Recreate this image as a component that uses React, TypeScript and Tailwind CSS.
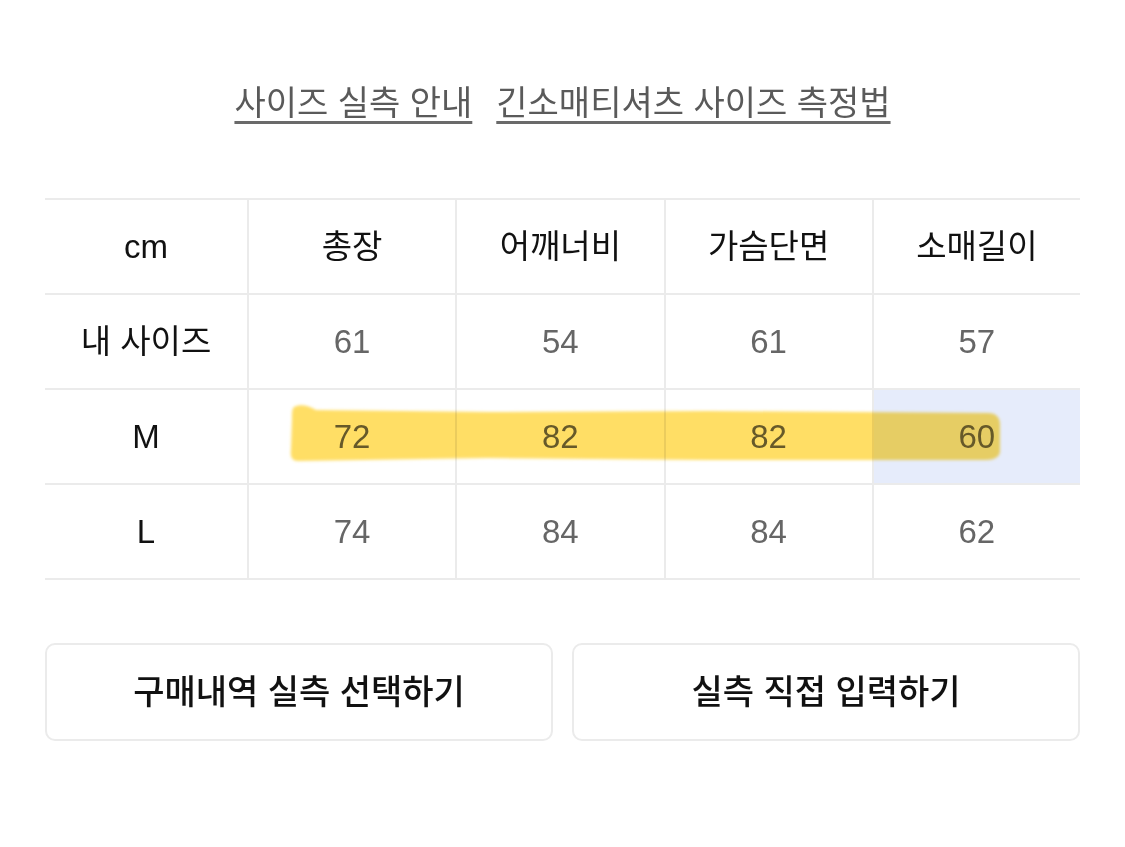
import React from "react";

const font = { fontFamily: '"Liberation Sans", "Noto Sans CJK KR", sans-serif' };

const headers = ["cm", "총장", "어깨너비", "가슴단면", "소매길이"];
const rows: { label: string; values: string[] }[] = [
  { label: "내 사이즈", values: ["61", "54", "61", "57"] },
  { label: "M", values: ["72", "82", "82", "60"] },
  { label: "L", values: ["74", "84", "84", "62"] },
];

export default function App() {
  return (
    <div className="w-[1125px] h-[847px] bg-white relative overflow-hidden" style={font}>
      <div className="flex justify-center gap-[24px] pt-[83px] h-[198px]">
        <span className="text-[34px] leading-[40px] text-[#5a5a5a] underline decoration-[3px] underline-offset-[6px] decoration-[#6a6a6a]">
          사이즈 실측 안내
        </span>
        <span className="text-[34px] leading-[40px] text-[#5a5a5a] underline decoration-[3px] underline-offset-[6px] decoration-[#6a6a6a]">
          긴소매티셔츠 사이즈 측정법
        </span>
      </div>

      <div className="relative mx-[45px]">
        <div className="grid grid-cols-[202px_repeat(4,1fr)] border-t-2 border-[#ebebeb]">
          {headers.map((h, i) => (
            <div
              key={h}
              className={`h-[95px] flex items-center justify-center border-b-2 border-[#ebebeb] text-[33px] text-[#111] ${
                i > 0 ? "border-l-2" : ""
              }`}
            >
              {h}
            </div>
          ))}
          {rows.map((r) => (
            <React.Fragment key={r.label}>
              <div className="h-[95px] flex items-center justify-center border-b-2 border-[#ebebeb] text-[33px] text-[#111]">
                {r.label}
              </div>
              {r.values.map((v, j) => (
                <div
                  key={j}
                  className={`h-[95px] flex items-center justify-center border-b-2 border-l-2 border-[#ebebeb] text-[33px] text-[#666] ${
                    r.label === "M" && j === 3 ? "bg-[#e6ecfb]" : ""
                  }`}
                >
                  {v}
                </div>
              ))}
            </React.Fragment>
          ))}
        </div>
        <svg
          className="absolute left-[243px] top-[203px] pointer-events-none mix-blend-multiply"
          width="720"
          height="68"
          viewBox="0 0 720 68"
        >
          <defs>
            <filter id="soft" x="-5%" y="-20%" width="110%" height="140%">
              <feGaussianBlur stdDeviation="1.6" />
            </filter>
          </defs>
          <path
            d="M6 6 C12 3 20 4 28 9 L200 11 L420 10 L700 12 C708 12 712 16 712 24 L712 50 C712 56 706 59 698 59 L420 59 L200 57 L10 60 C4 60 2 56 3 48 L4 18 C4 12 4 8 6 6 Z"
            fill="#ffd84a"
            fillOpacity="0.85"
            filter="url(#soft)"
          />
        </svg>
      </div>

      <div className="flex gap-[19px] mx-[45px] mt-[63px]">
        <button className="flex-1 h-[98px] rounded-[10px] border-2 border-[#ebebeb] bg-white text-[34px] font-medium text-[#111] flex items-center justify-center">
          구매내역 실측 선택하기
        </button>
        <button className="flex-1 h-[98px] rounded-[10px] border-2 border-[#ebebeb] bg-white text-[34px] font-medium text-[#111] flex items-center justify-center">
          실측 직접 입력하기
        </button>
      </div>
    </div>
  );
}
